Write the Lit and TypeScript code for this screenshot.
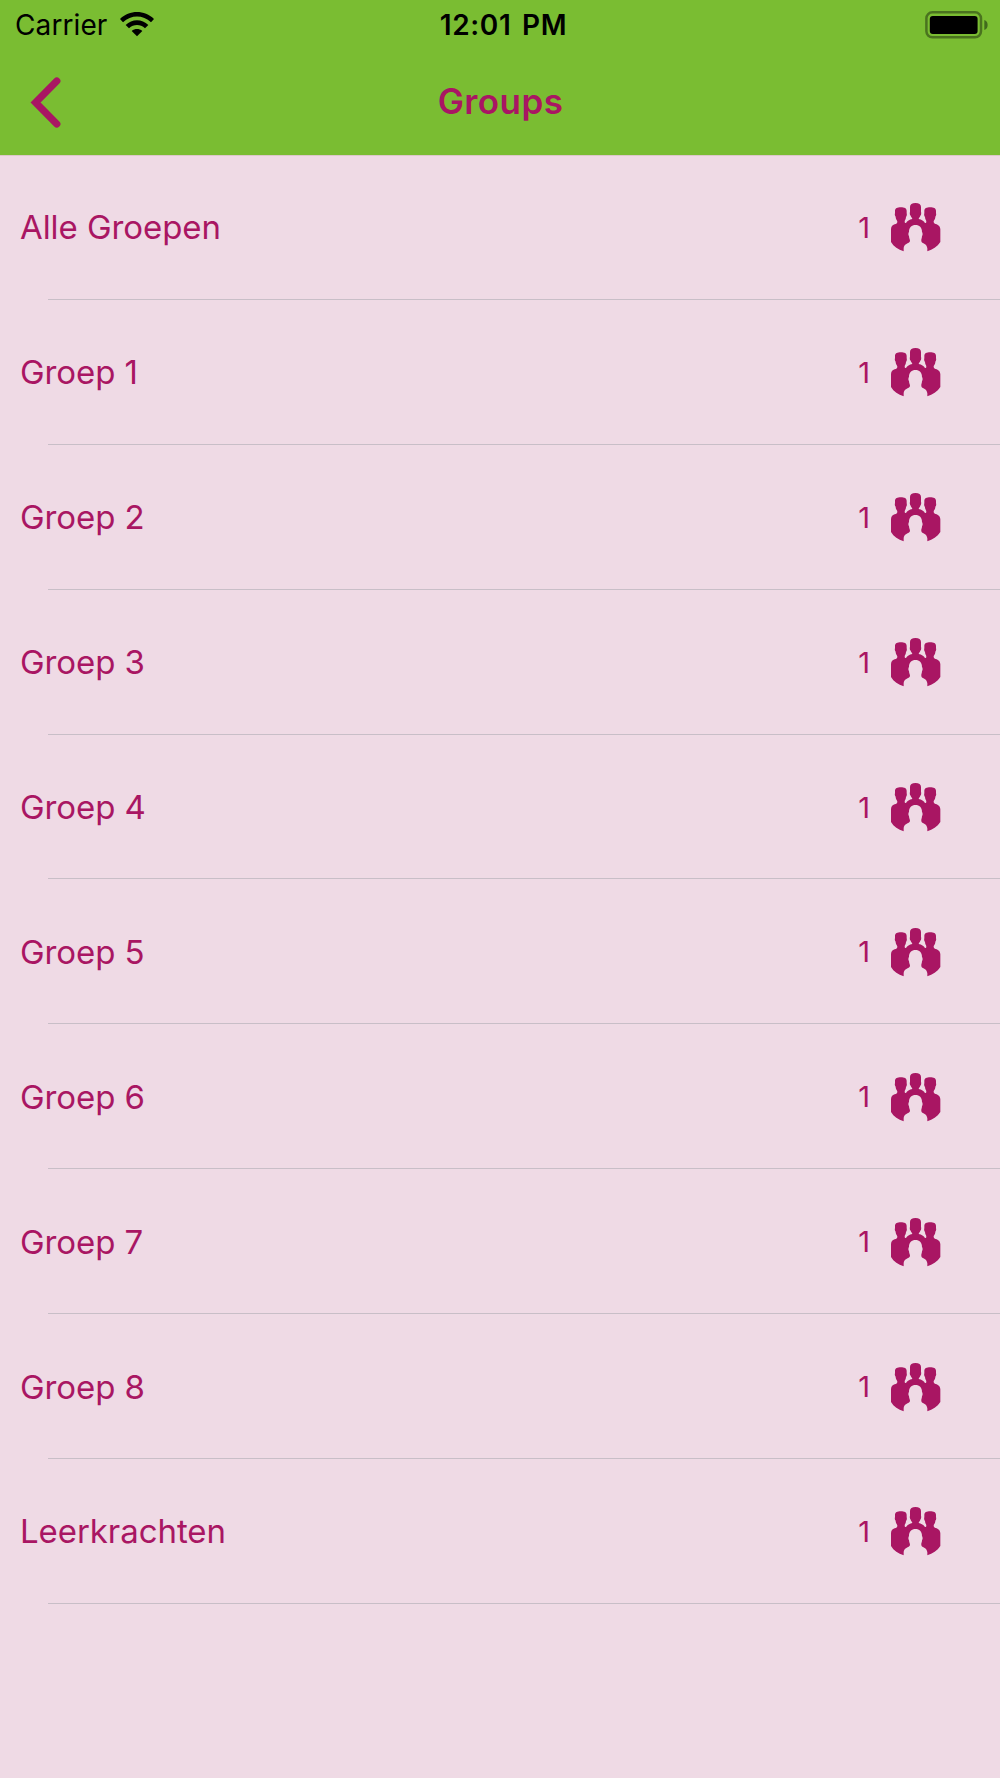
import { LitElement, html, css } from "lit";
import { customElement, property } from "lit/decorators.js";

interface Group {
  name: string;
  count: number;
}

const GROUPS: Group[] = [
  { name: "Alle Groepen", count: 1 },
  ...[1, 2, 3, 4, 5, 6, 7, 8].map((n) => ({ name: `Groep ${n}`, count: 1 })),
  { name: "Leerkrachten", count: 1 },
];

const peopleIcon = html`<svg width="50" height="50" viewBox="1 -2 150 150" fill="#a91663">
  <path d="M15 42C12 39 12 34 13 32V25C13 17 20 14 30.500 14C41 14 48 17 48 25V32C49 35 49 40 46 43C46 51 42 52 42 57C42 59 43 61 46 61C50 55 56 51 65 49C65 45 61 44 60 39C57 36 57 31 58 27V13C58 5 64 1 74.500 1C85 1 91 5 91 13V27C92 31 92 36 89 39C88 44 84 45 84 49C93 51 99 55 103 61C106 61 107 59 107 57C107 52 103 51 103 43C100 40 100 35 101 32V25C101 17 108 14 118.500 14C129 14 136 17 136 25V32C137 34 137 39 134 42C134 51 129 52 129 57C129 62 133 63 138 65C145 68 149 73 149 80V118C140 132 126 141 110 146V137C109 131 107 127 102 124C97 121 92 120 92 115C91 110 94 107 94 101C97 96 96 91 94 88C94 74 86 67 74.500 67C63 67 55 74 55 88C53 91 52 96 55 101C55 107 58 110 58 115C57 120 52 121 47 124C42 127 39 131 39 137V146C23 141 9 132 1 118V80C1 72 5 67 12 65C17 63 20 62 20 57C20 52 15 51 15 42Z" />
</svg>`;

@customElement("status-bar")
class StatusBar extends LitElement {
  static styles = css`
    :host {
      display: grid;
      grid-template-columns: 1fr auto 1fr;
      align-items: center;
      height: 51px;
      padding: 0 12px 0 15px;
      box-sizing: border-box;
      color: #000;
      font-size: 28px;
      line-height: 51px;
    }
    .left { display: flex; align-items: center; letter-spacing: 0.1px; }
    .wifi { display: block; margin-left: 13px; margin-bottom: 3px; }
    .time { font-weight: 600; letter-spacing: 0.6px; word-spacing: 3px; margin: 0 -2px 0 2px; }
    .battery { display: block; justify-self: end; margin-bottom: 2px; }
  `;

  render() {
    return html`
      <div class="left">
        <span>Carrier</span>
        <svg class="wifi" width="34" height="25" viewBox="0 0 102 75">
          <path d="M0 21C28-7 74-7 102 21L93 31C69 8 33 8 9 31Z" />
          <path d="M17 39C36 20 66 20 85 39L75 49C61 36 41 36 27 49Z" />
          <path d="M35 57C45 49 57 49 67 57L51 73Z" />
        </svg>
      </div>
      <span class="time">12:01 PM</span>
      <svg class="battery" width="63" height="28" viewBox="0 0 63 28">
        <rect x="1.4" y="1.3" width="54.6" height="25" rx="6" fill="none" stroke="#4a731f" stroke-width="2.5" />
        <rect x="4.8" y="4.9" width="47.8" height="18.2" rx="3" />
        <path d="M59.3 9C63.7 10 63.7 18 59.3 19Z" fill="#416a1d" />
      </svg>
    `;
  }
}

@customElement("nav-bar")
class NavBar extends LitElement {
  static styles = css`
    :host {
      display: grid;
      grid-template-columns: 1fr auto 1fr;
      align-items: center;
      height: 104px;
      padding: 0 30px;
      box-sizing: border-box;
      color: #a91663;
    }
    .back { display: block; margin-bottom: 2px; }
    .title { margin: 0 0 4px 1px; font-size: 35px; font-weight: 600; line-height: 44px; letter-spacing: 0.4px; }
  `;

  render() {
    return html`
      <svg class="back" width="31" height="51" viewBox="0 0 31 51" fill="none" stroke="#a91663"
        stroke-width="7.2" stroke-linecap="round" stroke-linejoin="miter">
        <path d="M26.8 4L5.6 25.5L26.8 47" />
      </svg>
      <h1 class="title">Groups</h1>
    `;
  }
}

@customElement("group-row")
class GroupRow extends LitElement {
  static styles = css`
    :host {
      display: flex;
      align-items: center;
      height: 144.9px;
      padding: 0 59px 0 20px;
      box-sizing: border-box;
      color: #a91663;
      background: linear-gradient(#c8bec7, #c8bec7) 48px 100% / 100% 1px no-repeat;
    }
    .name { flex: 1; font-size: 33px; line-height: 44px; letter-spacing: -0.07px; }
    .count { font-size: 29px; line-height: 44px; margin: 1px 21px 0 0; }
    svg { display: block; }
  `;

  @property({ attribute: false }) group!: Group;

  render() {
    return html`
      <span class="name">${this.group.name}</span>
      <span class="count">${this.group.count}</span>
      ${peopleIcon}
    `;
  }
}

@customElement("app-root")
class AppRoot extends LitElement {
  static styles = css`
    :host {
      display: block;
      min-height: 1778px;
      background: #efdae5;
      font-family: Inter, "Liberation Sans", sans-serif;
    }
    .header {
      height: 156px;
      margin-bottom: -1px;
      box-sizing: border-box;
      background: #7abd32;
      border-bottom: 1px solid #dcc8c8;
    }
  `;

  render() {
    return html`
      <header class="header">
        <status-bar></status-bar>
        <nav-bar></nav-bar>
      </header>
      <main>${GROUPS.map((g) => html`<group-row .group=${g}></group-row>`)}</main>
    `;
  }
}
